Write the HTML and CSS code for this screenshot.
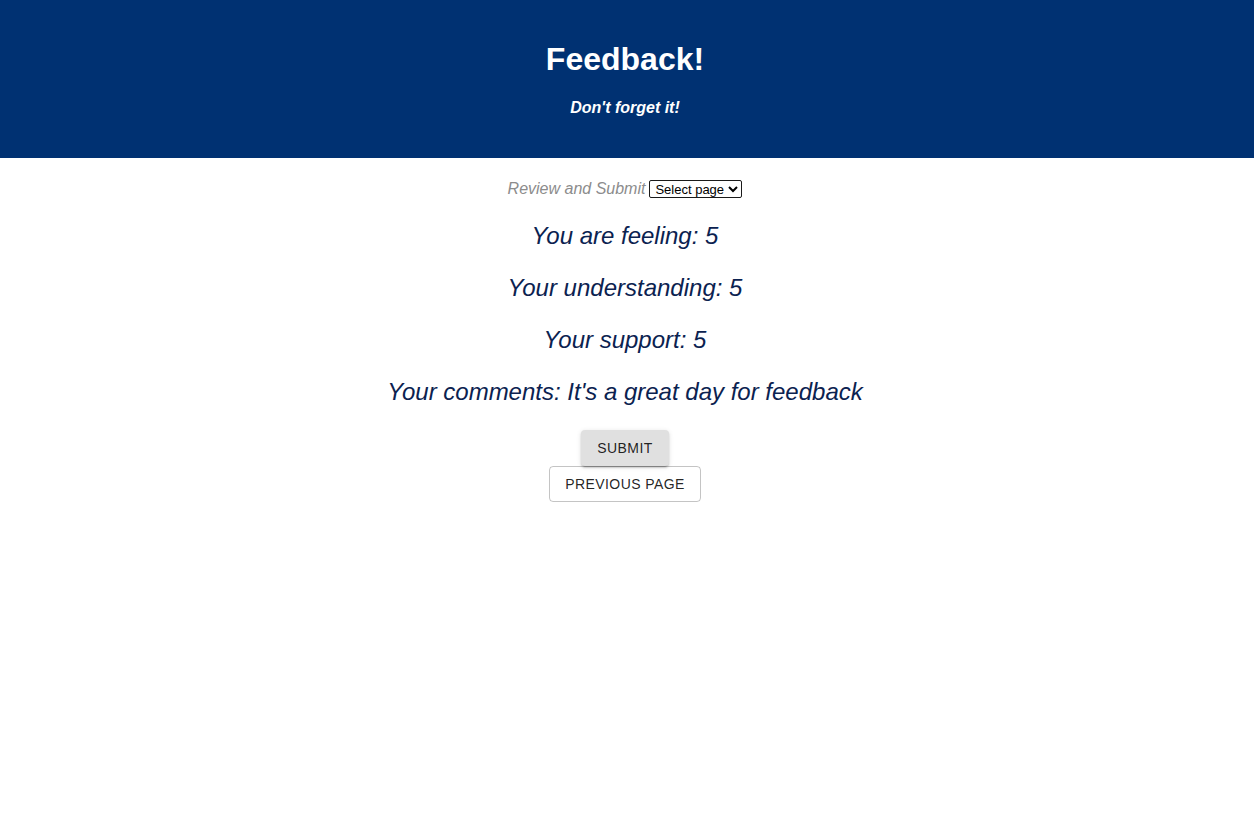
FILE: index.html
```html
<!DOCTYPE html>
<html lang="en">
<head>
<meta charset="utf-8">
<title>Feedback!</title>
<link rel="stylesheet" href="styles.css">
</head>
<body>
<header class="app-header">
  <h1 class="app-title">Feedback!</h1>
  <p class="app-subtitle">Don't forget it!</p>
</header>
<main class="review">
  <div class="nav-row">
    <span class="nav-label">Review and Submit</span>
    <select class="page-select">
      <option>Select page</option>
    </select>
  </div>
  <p class="answer">You are feeling: 5</p>
  <p class="answer">Your understanding: 5</p>
  <p class="answer">Your support: 5</p>
  <p class="answer">Your comments: It's a great day for feedback</p>
  <div class="actions">
    <button class="btn btn-contained" type="button">Submit</button>
    <button class="btn btn-outlined" type="button">Previous Page</button>
  </div>
</main>
</body>
</html>
```
FILE: styles.css
```css
html, body {
  margin: 0;
  padding: 0;
  background: #ffffff;
  font-family: "Liberation Sans", Arial, Helvetica, sans-serif;
}

.app-header {
  background: #003172;
  color: #ffffff;
  text-align: center;
  padding: 20px 4px 41px 0;
}

.app-title {
  margin: 21px 0;
  font-size: 32px;
  font-weight: bold;
  line-height: 37px;
}

.app-subtitle {
  margin: 0;
  font-size: 16px;
  font-weight: bold;
  font-style: italic;
  line-height: 18px;
}

.review {
  text-align: center;
  padding-right: 4px;
}

.nav-row {
  margin-top: 22px;
  display: flex;
  justify-content: center;
  align-items: center;
  gap: 4px;
  height: 18px;
}

.nav-label {
  font-style: italic;
  font-size: 16px;
  color: #8c8c8c;
}

.page-select {
  font-family: "Liberation Sans", Arial, sans-serif;
  font-size: 13px;
  height: 18px;
  padding: 0 1px;
  border: 1px solid #1a1a1a;
  border-radius: 2px;
  background: #ffffff;
  color: #000000;
}

.answer {
  margin: 24px 0;
  font-size: 24px;
  line-height: 28px;
  font-style: italic;
  color: #0b2250;
}

.actions {
  display: flex;
  flex-direction: column;
  align-items: center;
  margin-top: 24px;
}

.btn {
  font-family: "Liberation Sans", Arial, sans-serif;
  font-size: 14px;
  font-weight: 500;
  letter-spacing: 0.03em;
  text-transform: uppercase;
  line-height: 24px;
  border-radius: 4px;
  color: rgba(0, 0, 0, 0.87);
  cursor: pointer;
}

.btn-contained {
  height: 36px;
  padding: 6px 16px;
  border: none;
  background: #e0e0e0;
  box-shadow: 0 3px 1px -2px rgba(0,0,0,0.2), 0 2px 2px 0 rgba(0,0,0,0.14), 0 1px 5px 0 rgba(0,0,0,0.12);
}

.btn-outlined {
  height: 36px;
  padding: 5px 15px;
  border: 1px solid rgba(0, 0, 0, 0.23);
  background: transparent;
}
```
